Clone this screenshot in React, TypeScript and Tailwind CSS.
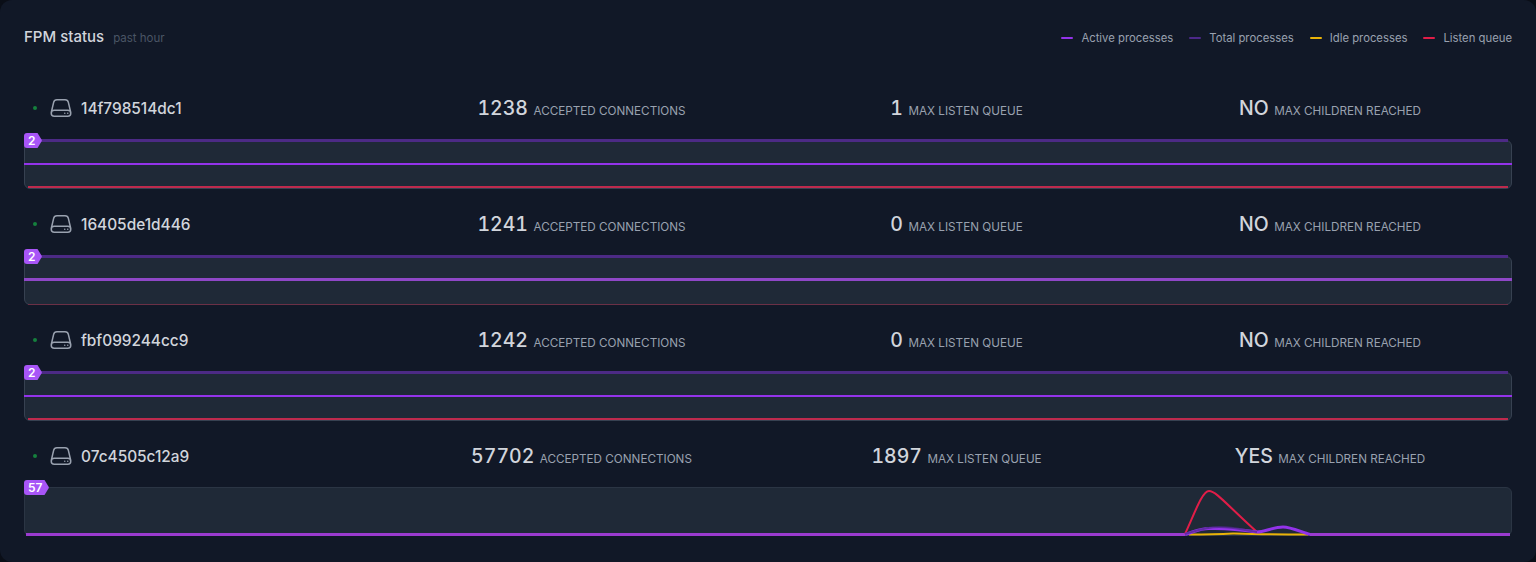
const font = { fontFamily: '"Inter", "Liberation Sans", sans-serif' };

const legend = [
  { label: "Active processes", color: "bg-[#9333ea]" },
  { label: "Total processes", color: "bg-[#4c2889]" },
  { label: "Idle processes", color: "bg-[#eab308]" },
  { label: "Listen queue", color: "bg-[#e11d48]" },
];

const hosts = [
  { name: "14f798514dc1", accepted: "1238", queue: "1", children: "NO", badge: "2", flat: "red" },
  { name: "16405de1d446", accepted: "1241", queue: "0", children: "NO", badge: "2", flat: "none" },
  { name: "fbf099244cc9", accepted: "1242", queue: "0", children: "NO", badge: "2", flat: "red" },
  { name: "07c4505c12a9", accepted: "57702", queue: "1897", children: "YES", badge: "57", flat: "spike" },
];

function ServerIcon() {
  return (
    <svg viewBox="0 0 24 24" fill="none" stroke="currentColor" strokeWidth={1.5} strokeLinecap="round" strokeLinejoin="round" className="h-6 w-6 text-gray-400">
      <path d="M21.75 17.25v-.228a4.5 4.5 0 00-.12-1.03l-2.268-9.64a3.375 3.375 0 00-3.285-2.602H7.923a3.375 3.375 0 00-3.285 2.602l-2.268 9.64a4.5 4.5 0 00-.12 1.03v.228m19.5 0a3 3 0 01-3 3H5.25a3 3 0 01-3-3m19.5 0a3 3 0 00-3-3H5.25a3 3 0 00-3 3m16.5 0h.008v.008h-.008v-.008zm-3 0h.008v.008h-.008v-.008z" />
    </svg>
  );
}

function Stat({ value, label }: { value: string; label: string }) {
  return (
    <div className="flex items-baseline justify-center gap-[5.5px]">
      <span className="text-[19.5px] leading-6 font-medium text-gray-300 tabular-nums">{value}</span>
      <span className="text-[11.7px] leading-4 text-gray-400 uppercase">{label}</span>
    </div>
  );
}

function Badge({ value }: { value: string }) {
  return (
    <div className="absolute top-[-8px] left-[-1px] flex h-[15px] items-center">
      <div className="flex h-[15px] items-center rounded-l-[3px] bg-[#a855f7] pr-[1px] pl-[4px] text-[12px] leading-none font-semibold text-white">{value}</div>
      <svg width="6" height="15" viewBox="0 0 6 15" className="block">
        <path d="M0 0h1.5l4 6.5q.6 1 0 2l-4 6.5H0z" fill="#a855f7" />
      </svg>
    </div>
  );
}

function Chart({ badge, flat }: { badge: string; flat: string }) {
  if (flat === "spike") {
    return (
      <div className="relative h-[49px] rounded-md border border-[#2b3544] bg-[#1f2937]">
        <svg viewBox="0 0 1488 49" className="absolute top-[-1px] left-[-1px] h-[49px] w-[1488px]" fill="none">
          <path d="M2 47.5H1161" stroke="#9b3bd0" strokeWidth="3" />
          <path d="M1286 47.5H1486" stroke="#9b3bd0" strokeWidth="3" />
          <path d="M1161 47C1170 28 1178 4 1185 4C1192 4 1202 17 1233 45" stroke="#e11d48" strokeWidth="2" />
          <path d="M1165 47.5C1180 47.5 1190 47.5 1209 46.5C1225 47 1240 47.5 1284 47.5" stroke="#eab308" strokeWidth="2" />
          <path d="M1161 47.5C1172 44 1176 41.5 1185 41.5C1200 41 1220 43 1233 45C1240 45 1250 40 1259 40C1267 40 1277 45 1286 47.5" stroke="#9333ea" strokeWidth="3" />
          <path d="M1161 47C1172 44 1180 40 1195 40C1210 40 1220 43 1233 45" stroke="#4c2889" strokeWidth="2" opacity="0.7" />
        </svg>
        <Badge value={badge} />
      </div>
    );
  }
  const thick = flat === "none";
  return (
    <div className="relative h-[49px] rounded-md border border-[#374151] bg-[#1f2937]">
      <div className="absolute top-[-2px] right-[3px] left-[3px] h-[3px] bg-[#4c2a85]" />
      {thick ? (
        <div className="absolute top-[21px] right-[-1px] left-[-1px] h-[3px] bg-[#8f47c7]" />
      ) : (
        <div className="absolute top-[22px] right-[-1px] left-[-1px] h-[2px] bg-[#9333ea]" />
      )}
      {flat === "red" ? (
        <div className="absolute right-[3px] bottom-0 left-[3px] h-[2px] bg-[#be2a4d]" />
      ) : (
        <div className="absolute right-[3px] bottom-[-1px] left-[3px] h-[1px] bg-[#6b3046]" />
      )}
      <Badge value={badge} />
    </div>
  );
}

export default function App() {
  return (
    <div className="h-[562px] w-[1536px] overflow-hidden bg-[#0a0e17]" style={font}>
      <div className="h-[562px] rounded-xl bg-[#111827] px-6 pt-[25px]">
        {/* Header */}
        <div className="flex h-6 items-center justify-between">
          <div className="flex items-baseline gap-[9px]">
            <h2 className="text-[15px] leading-6 font-medium text-gray-300">FPM status</h2>
            <span className="text-[11.5px] text-gray-600">past hour</span>
          </div>
          <div className="flex items-center gap-4 pt-[2px]">
            {legend.map((item) => (
              <div key={item.label} className="flex items-center gap-2">
                <span className={`h-[2px] w-3 rounded-full ${item.color}`} />
                <span className="text-[11.3px] text-gray-400">{item.label}</span>
              </div>
            ))}
          </div>
        </div>

        {/* Hosts */}
        <div className="mt-[35px] flex flex-col gap-[11px]">
          {hosts.map((host) => (
            <div key={host.name}>
              <div className="grid h-[48px] grid-cols-[370px_375px_375px_1fr] items-center">
                <div className="flex items-center">
                  <span className="ml-[9px] h-1 w-1 rounded-full bg-[#15803d]" />
                  <span className="ml-3"><ServerIcon /></span>
                  <span className="ml-2 pt-[2px] text-[15.4px] font-medium text-gray-300">{host.name}</span>
                </div>
                <Stat value={host.accepted} label="Accepted connections" />
                <Stat value={host.queue} label="Max listen queue" />
                <div className="pl-1">
                  <Stat value={host.children} label="Max children reached" />
                </div>
              </div>
              <div className={host.flat === "spike" ? "pt-[7px]" : "pt-2"}>
                <Chart badge={host.badge} flat={host.flat} />
              </div>
            </div>
          ))}
        </div>
      </div>
    </div>
  );
}
